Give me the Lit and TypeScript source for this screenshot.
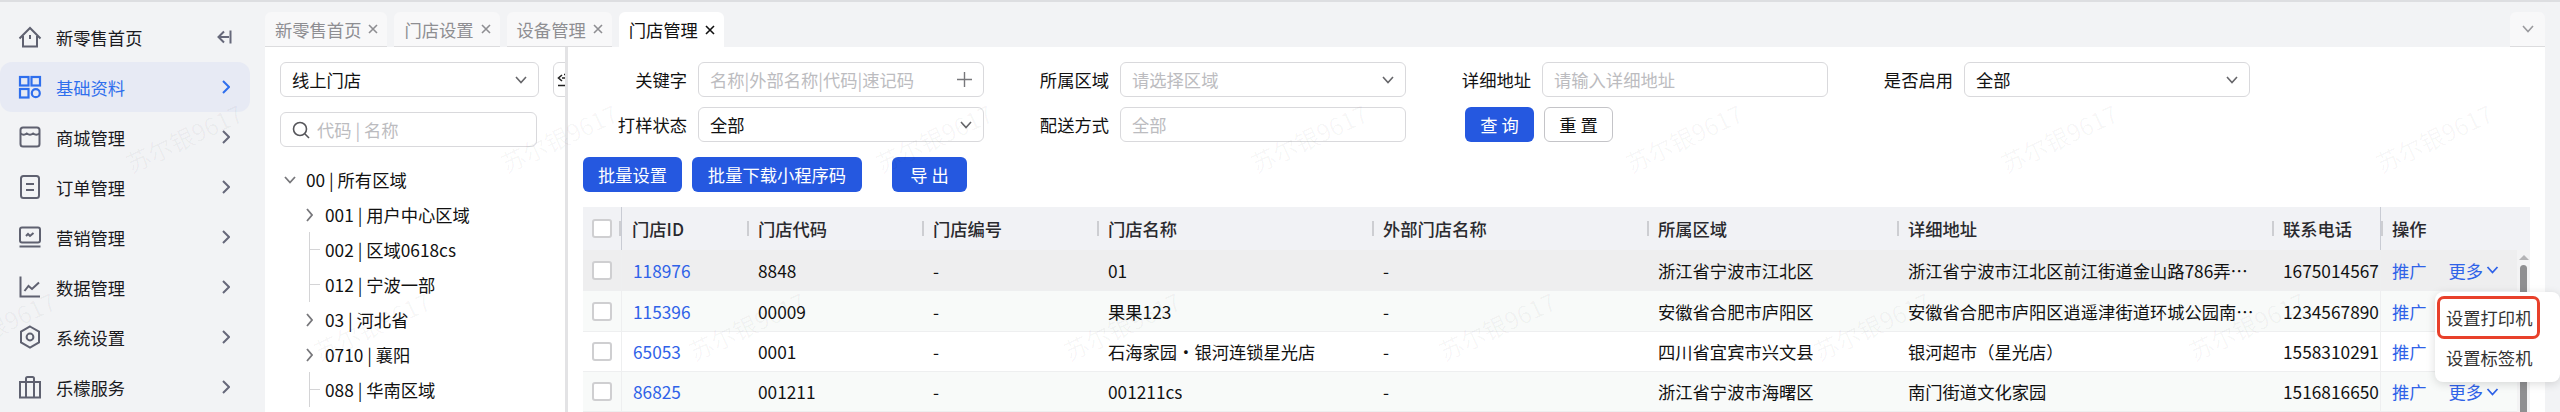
import { LitElement, html, css, svg } from 'lit';
import { customElement } from 'lit/decorators.js';

const chevronDown = html`<svg class="chev-down" width="12" height="8" viewBox="0 0 12 8" fill="none" stroke="currentColor" stroke-width="1.6"><path d="M1 1l5 5.5L11 1" /></svg>`;
const closeIcon = html`<svg class="close" width="10" height="10" viewBox="0 0 10 10" fill="none" stroke="currentColor" stroke-width="1.6"><path d="M1 1l8 8M9 1l-8 8" /></svg>`;

const navItems = [
  { label: '新零售首页', icon: svg`<path d="M1.5 13.5L12 3l10.5 10.5" /><path d="M5 11v10.5h14V11" /><path d="M12 10v4" />` },
  { label: '基础资料', active: true, icon: svg`<rect x="2" y="2" width="8.5" height="8.5" /><rect x="13.5" y="2" width="8.5" height="8.5" /><rect x="2" y="14" width="8.5" height="8.5" /><circle cx="17.8" cy="18.2" r="4" />` },
  { label: '商城管理', icon: svg`<rect x="2.5" y="2.5" width="19" height="19" rx="2.5" /><path d="M2.5 8.5q3.2 2.4 6.3 0q3.2 2.4 6.3 0q3.2 2.4 6.4 0" />` },
  { label: '订单管理', icon: svg`<rect x="3" y="1" width="18" height="22" rx="2.5" /><path d="M8 9h8M8 15h8" />` },
  { label: '营销管理', icon: svg`<rect x="2" y="2.5" width="20" height="15" rx="2" /><path d="M8 11l2-2 2 2 3.5-3" /><path d="M1.5 21.5h21" />` },
  { label: '数据管理', icon: svg`<path d="M2.5 1.5V21.5H22" /><path d="M6.5 16l4-5 3.5 3 7-6.5" />` },
  { label: '系统设置', icon: svg`<path d="M12 1.5l9 5.2v10.6l-9 5.2-9-5.2V6.7z" /><circle cx="12" cy="12" r="3.4" />` },
  { label: '乐檬服务', icon: svg`<rect x="2" y="7" width="20" height="15.5" /><path d="M8 22.5V3.5q0-1.5 1.5-1.5h5q1.5 0 1.5 1.5v19" />` },
];

const tabs = [
  { label: '新零售首页' },
  { label: '门店设置' },
  { label: '设备管理' },
  { label: '门店管理', active: true },
];

const tree = [
  { text: '00 | 所有区域', level: 0, arrow: 'down' },
  { text: '001 | 用户中心区域', level: 1, arrow: 'right' },
  { text: '002 | 区域0618cs', level: 1, leaf: true },
  { text: '012 | 宁波一部', level: 1, leaf: true },
  { text: '03 | 河北省', level: 1, arrow: 'right' },
  { text: '0710 | 襄阳', level: 1, arrow: 'right' },
  { text: '088 | 华南区域', level: 1, leaf: true },
];

const columns = ['门店ID', '门店代码', '门店编号', '门店名称', '外部门店名称', '所属区域', '详细地址', '联系电话'];

const rows = [
  ['118976', '8848', '-', '01', '-', '浙江省宁波市江北区', '浙江省宁波市江北区前江街道金山路786弄江北小区', '1675014567'],
  ['115396', '00009', '-', '果果123', '-', '安徽省合肥市庐阳区', '安徽省合肥市庐阳区逍遥津街道环城公园南门店', '1234567890'],
  ['65053', '0001', '-', '石海家园・银河连锁星光店', '-', '四川省宜宾市兴文县', '银河超市（星光店）', '1558310291'],
  ['86825', '001211', '-', '001211cs', '-', '浙江省宁波市海曙区', '南门街道文化家园', '1516816650'],
];

// watermark grid: rows 188px apart, every other row shifted half a period
const marks: { x: number; y: number }[] = [];
[138, 326].forEach((y, r) => {
  for (let k = 0; k < 7; k++) marks.push({ x: (r ? -3 : 184) + 375 * k, y });
});

@customElement('app-root')
export class AppRoot extends LitElement {
  static styles = css`
    :host {
      display: block;
      position: relative;
      width: 2560px;
      height: 412px;
      overflow: hidden;
      background: #f2f3f5;
      font-family: 'Noto Sans CJK SC', 'Noto Sans', sans-serif;
      font-size: 17.3px;
      color: #111;
    }
    * {
      box-sizing: border-box;
    }
    .page {
      display: flex;
      height: 412px;
      border-top: 2px solid #dddee1;
    }
    .sidebar {
      width: 265px;
      flex: none;
      padding-top: 10px;
    }
    .nav-item {
      display: flex;
      align-items: center;
      gap: 14px;
      width: 250px;
      height: 50px;
      padding: 0 20px 0 18px;
      border-radius: 12px;
      color: #1a1a1e;
    }
    .nav-item.active {
      background: #e7eaf4;
      color: #2f6fed;
    }
    .nav-icon {
      flex: none;
      fill: none;
      stroke: #5f6170;
      stroke-width: 2;
    }
    .active .nav-icon {
      stroke: #2f6fed;
      stroke-width: 2.2;
    }
    .nav-end {
      margin-left: auto;
      fill: none;
      stroke: #66687a;
      stroke-width: 2;
    }
    .active .nav-end {
      stroke: #2f6fed;
    }
    .collapse {
      margin-right: -2px;
    }
    .main {
      flex: 1;
      min-width: 0;
      display: flex;
      flex-direction: column;
      padding-right: 15px;
    }
    .tabbar {
      display: flex;
      gap: 7px;
      height: 45px;
      padding-top: 10px;
      flex: none;
    }
    .tab {
      display: flex;
      align-items: center;
      gap: 7px;
      padding: 0 9px 0 10px;
      background: #f8f8f9;
      border-bottom: 1px solid #dcdcde;
      border-radius: 6px 6px 0 0;
      color: #8e8e92;
    }
    .tab.active {
      background: #fff;
      border-bottom: 0;
      color: #111;
    }
    .tab-more {
      margin-left: auto;
      width: 35px;
      justify-content: center;
      padding: 0;
      color: #9a9a9e;
    }
    .content {
      flex: 1;
      min-height: 0;
      display: flex;
      background: #fff;
    }
    .tree-panel {
      width: 303px;
      flex: none;
      padding: 15px 0 0 15px;
      border-right: 3px solid #e3e3e5;
      overflow: hidden;
    }
    .tree-top {
      display: flex;
      gap: 14px;
    }
    .control {
      display: flex;
      align-items: center;
      height: 35px;
      padding: 0 11px;
      border: 1px solid #d9d9dc;
      border-radius: 6px;
      background: #fff;
      white-space: nowrap;
    }
    .control .chev-down {
      margin-left: auto;
      color: #66666a;
    }
    .placeholder {
      color: #bcbcc0;
    }
    .tree-select {
      width: 259px;
      flex: none;
    }
    .indent-box {
      width: 30px;
      flex: none;
      padding: 0 0 0 3px;
    }
    .search {
      width: 257px;
      margin-top: 15px;
      gap: 7px;
    }
    .tree {
      margin-top: 15px;
    }
    .tree-row {
      display: flex;
      align-items: center;
      height: 35px;
      white-space: nowrap;
    }
    .level-0 {
      padding-left: 4px;
      gap: 10px;
    }
    .level-1 {
      padding-left: 26px;
      gap: 12px;
    }
    .tree-row svg {
      flex: none;
      color: #77777b;
    }
    .tree-row .lead {
      width: 7px;
      height: 14px;
    }
    .tree-row.leaf {
      padding-left: 29px;
      gap: 5px;
    }
    .branch {
      flex: none;
      width: 11px;
      height: 35px;
      display: flex;
      align-items: center;
      border-left: 1px solid #d4d4d6;
    }
    .branch::after {
      content: '';
      width: 100%;
      height: 1px;
      background: #d4d4d6;
    }
    .right {
      flex: 1;
      min-width: 0;
      padding: 15px 15px 0;
    }
    .filters {
      display: grid;
      grid-template-columns: repeat(4, 401px);
      column-gap: 21px;
      row-gap: 10px;
    }
    .field {
      display: grid;
      grid-template-columns: 104px 286px;
      column-gap: 11px;
      align-items: center;
    }
    .field label {
      text-align: right;
      white-space: nowrap;
    }
    .plus {
      margin-left: auto;
      color: #77777b;
    }
    .query {
      display: flex;
      gap: 10px;
      margin-left: 38px;
    }
    .btn {
      display: flex;
      align-items: center;
      justify-content: center;
      height: 35px;
      border-radius: 6px;
      background: #2558e0;
      color: #fff;
      white-space: pre;
    }
    .btn.plain {
      background: #fff;
      color: #111;
      border: 1px solid #c4c4c8;
    }
    .w69 {
      width: 69px;
    }
    .actions {
      display: flex;
      margin-top: 15px;
    }
    .w99 {
      width: 99px;
    }
    .w170 {
      width: 170px;
      margin: 0 30px 0 10px;
    }
    .w75 {
      width: 75px;
    }
    .table {
      margin-top: 15px;
      width: 1947px;
    }
    .head,
    .row {
      display: grid;
      align-items: center;
    }
    .head {
      grid-template-columns: 39px 125px 175px 175px 275px 275px 250px 375px 108px 150px;
      height: 43px;
      background: #f1f2f5;
      font-weight: 500;
      color: #2a2a2e;
    }
    .row {
      grid-template-columns: 39px 125px 175px 175px 275px 275px 250px 375px 108px 137px;
      border-bottom: 1px solid #eeeff0;
      height: 41px;
    }
    .row.short {
      height: 40px;
    }
    .row:nth-child(1) {
      background: #eeeeef;
    }
    .row:nth-child(2),
    .row:nth-child(4) {
      background: #f8faf9;
    }
    .head-cell,
    .cell {
      display: flex;
      align-items: center;
      height: 100%;
      min-width: 0;
      white-space: nowrap;
    }
    .head-cell {
      gap: 9px;
    }
    .sep {
      width: 2px;
      height: 15px;
      background: #cdced2;
      flex: none;
    }
    .cell {
      padding-left: 11px;
    }
    .text {
      overflow: hidden;
      text-overflow: ellipsis;
    }
    .addr {
      padding-right: 14px;
    }
    .check-cell {
      padding: 0;
      justify-content: flex-end;
      border-right: 1px solid #eeeff0;
    }
    .head .check-cell {
      gap: 0;
      border-right: 1px solid #c9ccd4;
    }
    .id-head {
      padding-left: 10px;
    }
    .box {
      width: 20px;
      height: 19px;
      margin-right: 9px;
      background: #fff;
      border: 2px solid #cfcfd1;
      border-radius: 3px;
      flex: none;
    }
    .head .box {
      margin-right: 7px;
    }
    .ops-head {
      border-left: 1px solid #c9ccd4;
    }
    .ops {
      border-left: 1px solid #eeeff0;
      gap: 22px;
    }
    .link {
      color: #2f62e8;
    }
    .more {
      display: flex;
      align-items: center;
      gap: 3px;
      color: #2f62e8;
    }
    .more svg {
      color: #2f62e8;
    }
    .body {
      display: flex;
    }
    .rows {
      flex: none;
    }
    .scroll {
      flex: 1;
      display: flex;
      flex-direction: column;
      align-items: center;
      padding-top: 5px;
      gap: 5px;
      background: #f3f3f4;
    }
    .scroll-up {
      width: 0;
      height: 0;
      border: 5px solid transparent;
      border-top: 0;
      border-bottom-color: #b4b4b6;
    }
    .scroll-thumb {
      width: 7px;
      flex: 1;
      background: #8f8f91;
      border-radius: 4px 4px 0 0;
    }
    .menu {
      position: absolute;
      left: 2435px;
      top: 292px;
      width: 125px;
      height: 90px;
      padding-top: 5px;
      background: #fff;
      border-radius: 8px;
      box-shadow: 0 2px 10px rgba(0, 0, 0, 0.14);
      z-index: 2;
    }
    .menu-item {
      display: flex;
      align-items: center;
      height: 40px;
      padding-left: 11px;
      color: #333;
    }
    .menu-mark {
      position: absolute;
      left: 2px;
      top: 4px;
      width: 103px;
      height: 43px;
      border: 3px solid #e8402a;
      border-radius: 7px;
    }
    .watermarks {
      position: absolute;
      inset: 0;
      pointer-events: none;
      z-index: 3;
    }
    .mark {
      position: absolute;
      font-size: 24px;
      line-height: 30px;
      color: rgba(0, 0, 0, 0.035);
      white-space: nowrap;
      transform: translate(-50%, -50%) rotate(-25deg);
    }
  `;

  private renderTreeRow(n: (typeof tree)[number]) {
    if (n.leaf) {
      return html`<div class="tree-row leaf"><span class="branch"></span><span>${n.text}</span></div>`;
    }
    const lead =
      n.arrow === 'down'
        ? html`<svg width="12" height="8" viewBox="0 0 12 8" fill="none" stroke="currentColor" stroke-width="1.8"><path d="M1 1l5 5.5L11 1" /></svg>`
        : html`<svg class="lead" viewBox="0 0 7 14" fill="none" stroke="currentColor" stroke-width="1.8"><path d="M1 1l5 6-5 6" /></svg>`;
    return html`<div class="tree-row level-${n.level}">${lead}<span>${n.text}</span></div>`;
  }

  render() {
    return html`
      <div class="page">
        <nav class="sidebar">
          ${navItems.map(
            (item, i) => html`
              <div class="nav-item ${item.active ? 'active' : ''}">
                <svg class="nav-icon" width="24" height="24" viewBox="0 0 24 24">${item.icon}</svg>
                <span>${item.label}</span>
                ${i === 0
                  ? html`<svg class="nav-end collapse" width="16" height="16" viewBox="0 0 16 16"><path d="M8 2.5L2.5 8 8 13.5M2.5 8H13M14.5 1.5v13" /></svg>`
                  : html`<svg class="nav-end" width="8" height="14" viewBox="0 0 8 14"><path d="M1 1l6 6-6 6" /></svg>`}
              </div>
            `
          )}
        </nav>
        <div class="main">
          <div class="tabbar">
            ${tabs.map(
              (t) => html`<div class="tab ${t.active ? 'active' : ''}"><span>${t.label}</span>${closeIcon}</div>`
            )}
            <div class="tab tab-more">${chevronDown}</div>
          </div>
          <div class="content">
            <div class="tree-panel">
              <div class="tree-top">
                <div class="control tree-select"><span>线上门店</span>${chevronDown}</div>
                <div class="control indent-box">
                  <svg width="12" height="14" viewBox="0 0 12 14" fill="none" stroke="#222" stroke-width="1.6"><path d="M5 2L1.5 5 5 8M5 5h7M1 12.5h11M7 1.5h5" /></svg>
                </div>
              </div>
              <div class="control search">
                <svg width="18" height="18" viewBox="0 0 18 18" fill="none" stroke="#55555a" stroke-width="1.6"><circle cx="8" cy="8" r="6.5" /><path d="M13 13l4 4" /></svg>
                <span class="placeholder">代码 | 名称</span>
              </div>
              <div class="tree">${tree.map((n) => this.renderTreeRow(n))}</div>
            </div>
            <div class="right">
              <div class="filters">
                <div class="field">
                  <label>关键字</label>
                  <div class="control">
                    <span class="placeholder">名称|外部名称|代码|速记码</span>
                    <svg class="plus" width="15" height="15" viewBox="0 0 15 15" fill="none" stroke="currentColor" stroke-width="1.4"><path d="M7.5 0v15M0 7.5h15" /></svg>
                  </div>
                </div>
                <div class="field">
                  <label>所属区域</label>
                  <div class="control"><span class="placeholder">请选择区域</span>${chevronDown}</div>
                </div>
                <div class="field">
                  <label>详细地址</label>
                  <div class="control"><span class="placeholder">请输入详细地址</span></div>
                </div>
                <div class="field">
                  <label>是否启用</label>
                  <div class="control"><span>全部</span>${chevronDown}</div>
                </div>
                <div class="field">
                  <label>打样状态</label>
                  <div class="control"><span>全部</span>${chevronDown}</div>
                </div>
                <div class="field">
                  <label>配送方式</label>
                  <div class="control"><span class="placeholder">全部</span></div>
                </div>
                <div class="query">
                  <div class="btn w69">查 询</div>
                  <div class="btn plain w69">重 置</div>
                </div>
              </div>
              <div class="actions">
                <div class="btn w99">批量设置</div>
                <div class="btn w170">批量下载小程序码</div>
                <div class="btn w75">导 出</div>
              </div>
              <div class="table">
                <div class="head">
                  <div class="head-cell check-cell"><span class="box"></span><span class="sep"></span></div>
                  ${columns.map(
                    (c, i) =>
                      i === 0
                        ? html`<div class="head-cell id-head">${c}</div>`
                        : html`<div class="head-cell"><span class="sep"></span>${c}</div>`
                  )}
                  <div class="head-cell ops-head"><span class="sep"></span>操作</div>
                </div>
                <div class="body">
                  <div class="rows">
                    ${rows.map(
                      (r, ri) => html`
                        <div class="row ${ri > 1 ? 'short' : ''}">
                          <div class="cell check-cell"><span class="box"></span></div>
                          ${r.map(
                            (v, i) =>
                              html`<div class="cell ${i === 6 ? 'addr' : ''} ${i === 0 ? 'link' : ''}"><span class="text">${v}</span></div>`
                          )}
                          <div class="cell ops">
                            <span class="link">推广</span>
                            ${ri === 0 || ri === 3
                              ? html`<span class="more">更多<svg width="13" height="8" viewBox="0 0 12 8" fill="none" stroke="currentColor" stroke-width="1.8"><path d="M1 1l5 5.5L11 1" /></svg></span>`
                              : ''}
                          </div>
                        </div>
                      `
                    )}
                  </div>
                  <div class="scroll"><span class="scroll-up"></span><span class="scroll-thumb"></span></div>
                </div>
              </div>
            </div>
          </div>
        </div>
      </div>
      <div class="menu">
        <div class="menu-item">设置打印机</div>
        <div class="menu-item">设置标签机</div>
        <div class="menu-mark"></div>
      </div>
      <div class="watermarks">
        ${marks.map((m) => html`<span class="mark" style="left:${m.x}px;top:${m.y}px">苏尔银9617</span>`)}
      </div>
    `;
  }
}
